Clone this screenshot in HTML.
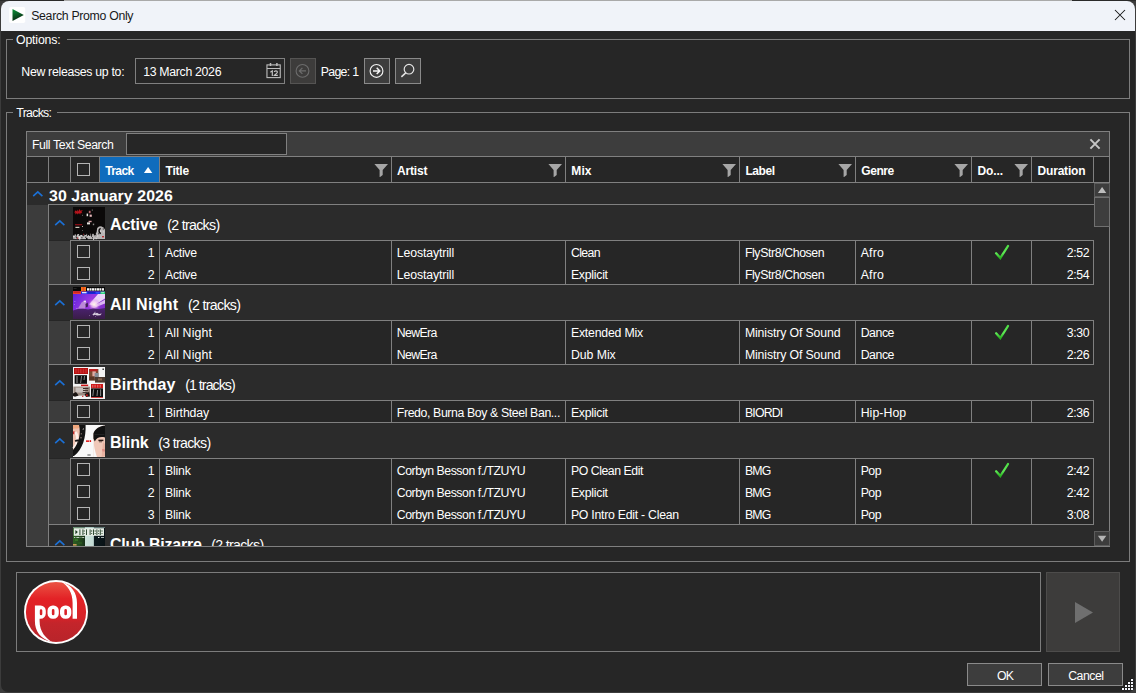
<!DOCTYPE html>
<html>
<head>
<meta charset="utf-8">
<title>Search Promo Only</title>
<style>
html,body{margin:0;padding:0;}
body{width:1136px;height:693px;overflow:hidden;background:#3c3c3c;font-family:"Liberation Sans",sans-serif;font-size:12px;color:#fff;position:relative;}
.abs{position:absolute;}
svg{display:block;overflow:visible;}
#win{position:absolute;left:1px;top:1px;width:1134px;height:691px;background:#262626;border-radius:8px 8px 7px 7px;overflow:hidden;}
.t{position:absolute;white-space:nowrap;}
.cb{position:absolute;box-sizing:border-box;border:1px solid #b4b4b4;background:#262626;}
</style>
</head>
<body>
<div class="abs" style="left:0;top:0;width:1136px;height:1px;background:#2a2a2a;"></div><div class="abs" style="left:64px;top:0;width:1008px;height:1px;background:#a9a9a9;"></div>
<div id="win">
<div class="abs" style="left:0px;top:0px;width:1134px;height:30px;background:#f0f3f9;"></div>
<svg class="abs" style="left:8px;top:6px" width="16" height="16" viewBox="0 0 16 16"><defs><linearGradient id="pg" x1="0" y1="0" x2="0.3" y2="1"><stop offset="0" stop-color="#0c963a"/><stop offset="1" stop-color="#0a2a14"/></linearGradient></defs><rect x="0.2" y="0" width="16" height="16" rx="1.8" fill="#ffffff"/><path d="M3.5 2 L14.8 7.9 L3.5 13.9 Z" fill="url(#pg)"/></svg>
<div class="t" style="top:7.00px;font-size:12.30px;line-height:16px;left:30.20px;letter-spacing:-0.313px;color:#191919;">Search Promo Only</div>
<svg class="abs" style="left:1113px;top:8px" width="12" height="12" viewBox="0 0 12 12"><path d="M1 1 L11 11 M11 1 L1 11" stroke="#151515" stroke-width="1.05" fill="none"/></svg>
<div class="abs" style="left:5px;top:38px;width:1124px;height:60px;box-sizing:border-box;border:1px solid #7c7c7c;"></div>
<div class="abs" style="left:12px;top:32px;width:54px;height:14px;background:#262626;"></div>
<div class="t" style="top:31.00px;font-size:12.30px;line-height:16px;left:15.00px;letter-spacing:-0.163px;">Options:</div>
<div class="t" style="top:63.00px;font-size:12.30px;line-height:16px;left:20.30px;letter-spacing:-0.300px;">New releases up to:</div>
<div class="abs" style="left:134px;top:57px;width:150px;height:26px;background:#262626;box-sizing:border-box;border:1px solid #808080;"></div>
<div class="t" style="top:63.00px;font-size:12.30px;line-height:16px;left:142.20px;letter-spacing:-0.312px;">13 March 2026</div>
<svg class="abs" style="left:264px;top:61px" width="17" height="17" viewBox="0 0 17 17"><g fill="none" stroke="#bdbdbd" stroke-width="1.1"><rect x="1.95" y="2.9" width="13.3" height="12.7"/><path d="M2 6.5 H15.2"/><path d="M5.5 0.9 V4 M11.9 0.9 V4" stroke-width="1.5"/><path d="M5.4 10.3 L7.3 8.9 V13.9 M9.3 10 C9.5 8.5 12.4 8.5 12.4 10.1 C12.4 11.4 10.2 12.2 9.3 13.4 H12.8" stroke-width="1.15" stroke="#c6c6c6"/></g></svg>
<div class="abs" style="left:289px;top:57px;width:26px;height:26px;background:#3d3c3b;box-sizing:border-box;border:1px solid #555453;"></div>
<svg class="abs" style="left:293px;top:61px" width="18" height="18" viewBox="0 0 18 18"><g fill="none" stroke="#6c6c6c" stroke-width="1.1"><circle cx="8.5" cy="8.9" r="6.4"/><path d="M12 8.9 H5.6 M8.4 5.9 L5.4 8.9 L8.4 11.9" stroke-width="1.3"/></g></svg>
<div class="t" style="top:63.00px;font-size:12.30px;line-height:16px;left:319.80px;letter-spacing:-0.700px;">Page: 1</div>
<div class="abs" style="left:363px;top:57px;width:26px;height:26px;background:#3d3d3d;box-sizing:border-box;border:1px solid #8a8a8a;"></div>
<svg class="abs" style="left:367px;top:61px" width="18" height="18" viewBox="0 0 18 18"><g fill="none" stroke="#f2f2f2" stroke-width="1.15"><circle cx="8.5" cy="8.9" r="6.4"/><path d="M5 8.9 H11.6 M8.7 5.8 L11.8 8.9 L8.7 12" stroke-width="1.5"/></g></svg>
<div class="abs" style="left:394px;top:57px;width:26px;height:26px;background:#3d3d3d;box-sizing:border-box;border:1px solid #8a8a8a;"></div>
<svg class="abs" style="left:398px;top:61px" width="18" height="18" viewBox="0 0 18 18"><g fill="none" stroke="#e4e4e4" stroke-width="1.2"><circle cx="10" cy="7.2" r="4.8"/><path d="M6.7 10.9 L2.4 14.9" stroke-width="1.5"/></g></svg>
<div class="abs" style="left:5px;top:111px;width:1124px;height:450px;box-sizing:border-box;border:1px solid #7c7c7c;"></div>
<div class="abs" style="left:12px;top:105px;width:44px;height:14px;background:#262626;"></div>
<div class="t" style="top:104.00px;font-size:12.30px;line-height:16px;left:15.30px;letter-spacing:-0.695px;">Tracks:</div>
<div class="abs" style="left:25px;top:130px;width:1084px;height:416px;box-sizing:border-box;border:1px solid #808080;"></div>
<div class="abs" style="left:26px;top:131px;width:1082px;height:24px;background:#3d3d3d;"></div>
<div class="t" style="top:136.00px;font-size:12.30px;line-height:16px;left:31.00px;letter-spacing:-0.404px;">Full Text Search</div>
<div class="abs" style="left:125px;top:132px;width:161px;height:22px;background:#262626;box-sizing:border-box;border:1px solid #808080;"></div>
<svg class="abs" style="left:1088px;top:137px" width="12" height="12" viewBox="0 0 12 12"><path d="M1.4 1.4 L10.6 10.6 M10.6 1.4 L1.4 10.6" stroke="#c6c6c6" stroke-width="2" fill="none"/></svg>
<div class="abs" style="left:26px;top:155px;width:1082px;height:1px;background:#808080;"></div>
<div class="abs" style="left:26px;top:181px;width:1082px;height:1px;background:#808080;"></div>
<div class="abs" style="left:47px;top:156px;width:1px;height:25px;background:#808080;"></div>
<div class="abs" style="left:69px;top:156px;width:1px;height:25px;background:#808080;"></div>
<div class="abs" style="left:98px;top:156px;width:1px;height:25px;background:#808080;"></div>
<div class="abs" style="left:158px;top:156px;width:1px;height:25px;background:#808080;"></div>
<div class="abs" style="left:390px;top:156px;width:1px;height:25px;background:#808080;"></div>
<div class="abs" style="left:564px;top:156px;width:1px;height:25px;background:#808080;"></div>
<div class="abs" style="left:738px;top:156px;width:1px;height:25px;background:#808080;"></div>
<div class="abs" style="left:854px;top:156px;width:1px;height:25px;background:#808080;"></div>
<div class="abs" style="left:970px;top:156px;width:1px;height:25px;background:#808080;"></div>
<div class="abs" style="left:1030px;top:156px;width:1px;height:25px;background:#808080;"></div>
<div class="abs" style="left:1092px;top:156px;width:1px;height:25px;background:#808080;"></div>
<div class="abs" style="left:99px;top:156px;width:59px;height:25px;background:#0f6cbd;"></div>
<div class="cb" style="left:76px;top:162px;width:13px;height:13px;"></div>
<div class="t" style="top:162.00px;font-size:12.00px;line-height:16px;left:104.20px;letter-spacing:-0.592px;font-weight:bold;">Track</div>
<div class="t" style="top:162.00px;font-size:12.00px;line-height:16px;left:164.50px;letter-spacing:-0.190px;font-weight:bold;">Title</div>
<div class="t" style="top:162.00px;font-size:12.00px;line-height:16px;left:396.00px;letter-spacing:-0.156px;font-weight:bold;">Artist</div>
<div class="t" style="top:162.00px;font-size:12.00px;line-height:16px;left:570.30px;letter-spacing:0.099px;font-weight:bold;">Mix</div>
<div class="t" style="top:162.00px;font-size:12.00px;line-height:16px;left:744.40px;letter-spacing:-0.388px;font-weight:bold;">Label</div>
<div class="t" style="top:162.00px;font-size:12.00px;line-height:16px;left:860.20px;letter-spacing:-0.396px;font-weight:bold;">Genre</div>
<div class="t" style="top:162.00px;font-size:12.00px;line-height:16px;left:976.60px;letter-spacing:-0.140px;font-weight:bold;">Do...</div>
<div class="t" style="top:162.00px;font-size:12.00px;line-height:16px;left:1036.60px;letter-spacing:-0.204px;font-weight:bold;">Duration</div>
<svg class="abs" style="left:142px;top:165px" width="10" height="8" viewBox="0 0 10 8"><path d="M0.9 7 L5.1 0.9 L9.3 7 Z" fill="#fff"/></svg>
<svg class="abs" style="left:373px;top:163px" width="14" height="14" viewBox="0 0 14 14"><path d="M0.4 0 H14 L8.7 6 V11 L6.1 13 H5.6 V6 Z" fill="#a6a6a6"/></svg>
<svg class="abs" style="left:547px;top:163px" width="14" height="14" viewBox="0 0 14 14"><path d="M0.4 0 H14 L8.7 6 V11 L6.1 13 H5.6 V6 Z" fill="#a6a6a6"/></svg>
<svg class="abs" style="left:721px;top:163px" width="14" height="14" viewBox="0 0 14 14"><path d="M0.4 0 H14 L8.7 6 V11 L6.1 13 H5.6 V6 Z" fill="#a6a6a6"/></svg>
<svg class="abs" style="left:837px;top:163px" width="14" height="14" viewBox="0 0 14 14"><path d="M0.4 0 H14 L8.7 6 V11 L6.1 13 H5.6 V6 Z" fill="#a6a6a6"/></svg>
<svg class="abs" style="left:953px;top:163px" width="14" height="14" viewBox="0 0 14 14"><path d="M0.4 0 H14 L8.7 6 V11 L6.1 13 H5.6 V6 Z" fill="#a6a6a6"/></svg>
<svg class="abs" style="left:1013px;top:163px" width="14" height="14" viewBox="0 0 14 14"><path d="M0.4 0 H14 L8.7 6 V11 L6.1 13 H5.6 V6 Z" fill="#a6a6a6"/></svg>
<div class="abs" style="left:1093px;top:182px;width:15px;height:363px;background:#2b2b2b;"></div>
<div class="abs" style="left:1093px;top:182px;width:16px;height:14px;background:#3d3d3d;box-sizing:border-box;border:1px solid #5c5c5c;"></div>
<svg class="abs" style="left:1096px;top:185px" width="10" height="8" viewBox="0 0 10 8"><path d="M0.9 7 L5.1 1 L9.3 7 Z" fill="#bdbdbd"/></svg>
<div class="abs" style="left:1093px;top:196px;width:16px;height:30px;background:#3d3d3d;box-sizing:border-box;border:1px solid #707070;"></div>
<div class="abs" style="left:1093px;top:530px;width:16px;height:15px;background:#3d3d3d;box-sizing:border-box;border:1px solid #5c5c5c;"></div>
<svg class="abs" style="left:1096px;top:534px" width="10" height="8" viewBox="0 0 10 8"><path d="M0.9 0.8 L5.1 6.8 L9.3 0.8 Z" fill="#b4b4b4"/></svg>
<div class="abs" style="left:26px;top:182px;width:1067px;height:363px;overflow:hidden;">
<div class="abs" style="left:0px;top:0px;width:1067px;height:22px;background:#2b2b2b;"></div>
<svg class="abs" style="left:5.1px;top:8.4px" width="12" height="8" viewBox="0 0 12 8"><path d="M1.2 5.2 L5.8 0.8 L10.4 5.2" stroke="#1b70d6" stroke-width="1.6" fill="none"/></svg>
<div class="t" style="top:4.50px;font-size:15.40px;line-height:16px;left:22.10px;letter-spacing:0.092px;font-weight:bold;transform:rotate(0.03deg) scale(1.030,1.000);transform-origin:0 13.50px;">30 January 2026</div>
<div class="abs" style="left:0px;top:22px;width:21px;height:400px;background:#3c3c3c;"></div>
<div class="abs" style="left:21px;top:21px;width:1px;height:397px;background:#808080;"></div>
<div class="abs" style="left:21px;top:21px;width:1046px;height:1px;background:#808080;"></div>
<div class="abs" style="left:22px;top:22px;width:1045px;height:35px;background:#2b2b2b;"></div>
<svg class="abs" style="left:27px;top:37px" width="12" height="8" viewBox="0 0 12 8"><path d="M1.2 5.2 L5.8 0.8 L10.4 5.2" stroke="#1b70d6" stroke-width="1.6" fill="none"/></svg>
<svg class="abs" style="left:46px;top:24px" width="32" height="32" viewBox="0 0 32 32"><rect x="0" y="0" width="32" height="32" fill="#0b0909"/><path d="M1.2 5.5 L2.6 3.2 L3.4 4.6 L4.4 2.4 L5 4.8 L6.6 2 L7.4 3.8 L9.8 3 L8.4 5 L9.6 6.2 L7.6 6 L7.2 7.8 L6 6 L4.6 7.6 L4 6.2 L2 7.4 L2.6 5.8 Z" fill="#b8141c"/><rect x="2" y="17.2" width="7.2" height="1.1" fill="#a01018"/><rect x="2.4" y="19.8" width="4" height="1.1" fill="#e6e2d2"/><rect x="13.6" y="6.6" width="1.5" height="2.6" fill="#ecebe6"/><rect x="15.8" y="3.8" width="1.8" height="2.4" fill="#b86870"/><rect x="16.6" y="7.6" width="2.2" height="2.2" fill="#e8b8bc"/><rect x="18.8" y="2.6" width="1" height="1" fill="#9a9a98"/><rect x="15.6" y="13.8" width="3" height="1.4" fill="#d8a0a6"/><rect x="14" y="15.4" width="3" height="2" fill="#e4e0dc"/><rect x="19.8" y="16.6" width="1.4" height="1.6" fill="#8a8886"/><rect x="9" y="7.8" width="1" height="1" fill="#6a6866"/><rect x="9" y="19" width="1" height="1" fill="#b8b6ae"/><rect x="9" y="23" width="1" height="1" fill="#5a5856"/><path d="M0 30.2 L1.5 28.6 L3 29.6 L4.6 27.4 L6 29 L8 27.8 L10 28.6 L13 28 L14 26.4 L15 28.4 L18 28.2 L20 26.6 L22 28 L23.6 25 L24.2 21 L26 19.6 L28 19.2 L30.6 20.6 L32 22.6 L32 32 L0 32 Z" fill="#b9b6b6"/><rect x="10" y="27.2" width="0.8" height="0.8" fill="#0b0909"/><rect x="25.5" y="26.3" width="0.8" height="0.8" fill="#8a8888"/><rect x="2.7" y="28.5" width="0.8" height="2" fill="#1a1616"/><rect x="13.2" y="30.4" width="0.8" height="2" fill="#0b0909"/><rect x="19.5" y="31" width="1.4" height="1" fill="#8a8888"/><rect x="1.5" y="27.5" width="0.8" height="1" fill="#8a8888"/><rect x="13" y="29" width="1" height="2" fill="#8a8888"/><rect x="25.3" y="26.3" width="0.8" height="1" fill="#0b0909"/><rect x="3" y="29.8" width="0.8" height="2" fill="#8a8888"/><rect x="6.4" y="29.7" width="1" height="1" fill="#d8d6d6"/><rect x="18.2" y="28.6" width="0.8" height="0.8" fill="#e8e6e6"/><rect x="21.7" y="27.6" width="1" height="2" fill="#8a8888"/><rect x="15.3" y="28.1" width="1" height="2" fill="#d8d6d6"/><rect x="30.4" y="24.4" width="0.8" height="1" fill="#e8e6e6"/><rect x="13.1" y="31" width="1.4" height="2" fill="#0b0909"/><rect x="24.5" y="23.5" width="1.4" height="1" fill="#e8e6e6"/><rect x="18" y="28.6" width="1" height="1" fill="#0b0909"/><rect x="21.6" y="26.8" width="1.4" height="1" fill="#0b0909"/><rect x="20.1" y="31.2" width="1" height="2" fill="#d8d6d6"/><rect x="12" y="29.6" width="1" height="1" fill="#0b0909"/><rect x="5.2" y="27.1" width="0.8" height="1" fill="#0b0909"/><rect x="4" y="27.7" width="1" height="0.8" fill="#d8d6d6"/><rect x="5.2" y="28.4" width="0.8" height="1" fill="#e8e6e6"/><rect x="26.8" y="24.4" width="1.4" height="1" fill="#e8e6e6"/><rect x="29.7" y="21.6" width="1.4" height="0.8" fill="#1a1616"/><rect x="0.4" y="30.4" width="1" height="1" fill="#1a1616"/><rect x="0.1" y="28.5" width="1.4" height="2" fill="#e8e6e6"/><rect x="9.9" y="27.1" width="1.4" height="2" fill="#8a8888"/><rect x="21" y="26.8" width="1.4" height="1" fill="#0b0909"/><rect x="12.3" y="28.4" width="1.4" height="1" fill="#d8d6d6"/><rect x="1.9" y="26.8" width="1" height="0.8" fill="#1a1616"/><rect x="3.4" y="29.3" width="0.8" height="2" fill="#0b0909"/><rect x="4.7" y="27" width="1.4" height="0.8" fill="#e8e6e6"/><rect x="2.2" y="27.5" width="0.8" height="2" fill="#d8d6d6"/><rect x="7.8" y="28.1" width="1" height="0.8" fill="#e8e6e6"/><rect x="3.6" y="28.8" width="1" height="1" fill="#d8d6d6"/><rect x="9.7" y="27.2" width="1" height="2" fill="#0b0909"/><rect x="8.2" y="30.4" width="1.4" height="0.8" fill="#1a1616"/><rect x="6.4" y="31" width="0.8" height="2" fill="#e8e6e6"/><rect x="16.8" y="26.6" width="1" height="2" fill="#8a8888"/><rect x="26.8" y="22.6" width="0.8" height="1" fill="#e8e6e6"/><rect x="23.9" y="28.6" width="1.4" height="0.8" fill="#e8e6e6"/><rect x="19" y="30.2" width="0.8" height="1" fill="#1a1616"/><rect x="22.9" y="27.6" width="1" height="1" fill="#8a8888"/><rect x="22.7" y="31.2" width="1" height="1" fill="#e8e6e6"/><rect x="6" y="29.3" width="1" height="2" fill="#e8e6e6"/><path d="M27.6 21.4 C25.4 22.6 25.4 25.6 27.8 26.6" stroke="#0b0909" stroke-width="1.5" fill="none"/><path d="M16.6 23.4 V29 M18.6 22.6 V29 M21.4 24 V28.4 M14.4 25 V29" stroke="#0b0909" stroke-width="0.9"/><rect x="4" y="30.6" width="1.1" height="1.1" fill="#c01018"/><rect x="29.2" y="29" width="1.6" height="1.4" fill="#b81018"/><rect x="10" y="26.8" width="1" height="0.8" fill="#a81018"/></svg>
<div class="t" style="top:33.50px;font-size:16.00px;line-height:16px;left:83.00px;letter-spacing:-0.071px;font-weight:bold;">Active</div>
<div class="t" style="top:34.00px;font-size:14.20px;line-height:16px;left:140.20px;letter-spacing:-0.687px;">(2 tracks)</div>
<div class="abs" style="left:43px;top:57px;width:1024px;height:1px;background:#808080;"></div>
<div class="abs" style="left:22px;top:58px;width:21px;height:44px;background:#3c3c3c;"></div>
<div class="abs" style="left:44px;top:58px;width:1022px;height:44px;background:#262626;"></div>
<div class="abs" style="left:43px;top:57px;width:1px;height:45px;background:#808080;"></div>
<div class="abs" style="left:72px;top:57px;width:1px;height:45px;background:#808080;"></div>
<div class="abs" style="left:132px;top:57px;width:1px;height:45px;background:#808080;"></div>
<div class="abs" style="left:364px;top:57px;width:1px;height:45px;background:#808080;"></div>
<div class="abs" style="left:538px;top:57px;width:1px;height:45px;background:#808080;"></div>
<div class="abs" style="left:712px;top:57px;width:1px;height:45px;background:#808080;"></div>
<div class="abs" style="left:828px;top:57px;width:1px;height:45px;background:#808080;"></div>
<div class="abs" style="left:944px;top:57px;width:1px;height:45px;background:#808080;"></div>
<div class="abs" style="left:1004px;top:57px;width:1px;height:45px;background:#808080;"></div>
<div class="abs" style="left:1066px;top:57px;width:1px;height:45px;background:#808080;"></div>
<div class="cb" style="left:50px;top:62px;width:13px;height:13px;"></div>
<div class="t" style="top:62.00px;font-size:12.30px;line-height:16px;left:-172.40px;width:300.00px;text-align:right;">1</div>
<div class="t" style="top:62.00px;font-size:12.30px;line-height:16px;left:138.00px;letter-spacing:-0.283px;">Active</div>
<div class="t" style="top:62.00px;font-size:12.30px;line-height:16px;left:369.80px;letter-spacing:-0.124px;">Leostaytrill</div>
<div class="t" style="top:62.00px;font-size:12.30px;line-height:16px;left:543.90px;letter-spacing:-0.588px;">Clean</div>
<div class="t" style="top:62.00px;font-size:12.30px;line-height:16px;left:717.90px;letter-spacing:-0.384px;">FlyStr8/Chosen</div>
<div class="t" style="top:62.00px;font-size:12.30px;line-height:16px;left:833.70px;letter-spacing:0.235px;">Afro</div>
<svg class="abs" style="left:965px;top:60px" width="20" height="18" viewBox="0 0 20 18"><defs><linearGradient id="ck0" x1="0" y1="0" x2="0" y2="1"><stop offset="0" stop-color="#4fe046"/><stop offset="0.6" stop-color="#5fe855"/><stop offset="1" stop-color="#27b01f"/></linearGradient></defs><path d="M4.1 10.3 L8.3 15 L16 3" stroke="url(#ck0)" stroke-width="2.3" fill="none" stroke-linecap="round" stroke-linejoin="miter"/></svg>
<div class="t" style="top:62.00px;font-size:12.30px;line-height:16px;left:762.60px;width:299.67px;text-align:right;letter-spacing:-0.335px;">2:52</div>
<div class="cb" style="left:50px;top:84px;width:13px;height:13px;"></div>
<div class="t" style="top:84.00px;font-size:12.30px;line-height:16px;left:-172.40px;width:300.00px;text-align:right;">2</div>
<div class="t" style="top:84.00px;font-size:12.30px;line-height:16px;left:138.00px;letter-spacing:-0.283px;">Active</div>
<div class="t" style="top:84.00px;font-size:12.30px;line-height:16px;left:369.80px;letter-spacing:-0.124px;">Leostaytrill</div>
<div class="t" style="top:84.00px;font-size:12.30px;line-height:16px;left:543.90px;letter-spacing:-0.258px;">Explicit</div>
<div class="t" style="top:84.00px;font-size:12.30px;line-height:16px;left:717.90px;letter-spacing:-0.384px;">FlyStr8/Chosen</div>
<div class="t" style="top:84.00px;font-size:12.30px;line-height:16px;left:833.70px;letter-spacing:0.235px;">Afro</div>
<div class="t" style="top:84.00px;font-size:12.30px;line-height:16px;left:762.60px;width:299.67px;text-align:right;letter-spacing:-0.335px;">2:54</div>
<div class="abs" style="left:21px;top:101px;width:1046px;height:1px;background:#808080;"></div>
<div class="abs" style="left:22px;top:102px;width:1045px;height:35px;background:#2b2b2b;"></div>
<svg class="abs" style="left:27px;top:117px" width="12" height="8" viewBox="0 0 12 8"><path d="M1.2 5.2 L5.8 0.8 L10.4 5.2" stroke="#1b70d6" stroke-width="1.6" fill="none"/></svg>
<svg class="abs" style="left:46px;top:104px" width="32" height="32" viewBox="0 0 32 32"><defs><linearGradient id="an1" x1="0" y1="0.1" x2="1" y2="0.8"><stop offset="0" stop-color="#5220dc"/><stop offset="0.5" stop-color="#9a38e2"/><stop offset="1" stop-color="#7a2cc0"/></linearGradient><radialGradient id="an2" cx="0.66" cy="0.55" r="0.2"><stop offset="0" stop-color="#fffbe6"/><stop offset="0.45" stop-color="#f6d0f4" stop-opacity="0.75"/><stop offset="1" stop-color="#c060e0" stop-opacity="0"/></radialGradient><linearGradient id="an3" x1="0" y1="0" x2="0" y2="1"><stop offset="0" stop-color="#4a2270"/><stop offset="1" stop-color="#3a1c48"/></linearGradient></defs><rect x="0" y="0" width="32" height="32" fill="url(#an1)"/><path d="M16 17.5 L25 7 L32 7 L32 11.4 L21 18.5 Z" fill="#f3e2fb" opacity="0.92"/><path d="M21 18.6 L32 12.8 L32 16.4 L23 20 Z" fill="#efd8fa" opacity="0.8"/><rect x="0" y="0" width="32" height="32" fill="url(#an2)"/><path d="M0 23.4 L5 22 L10 21.4 L15 22.4 L20 21.6 L26 22 L32 21 L32 32 L0 32 Z" fill="url(#an3)"/><path d="M5 21.6 L8.6 15.6 L11 13.8 L13 14.4 L13.4 17 L12 21.6 Z" fill="#c9a4d6" opacity="0.75"/><rect x="10.8" y="13.6" width="2.2" height="1.6" fill="#f0e6f4" opacity="0.9"/><path d="M12.4 17 L14.8 15.4 L15 19.6 L12.8 20.6 Z" fill="#2a1838" opacity="0.8"/><rect x="1.4" y="14" width="0.9" height="0.9" fill="#c8a0f0" opacity="0.8"/><rect x="1" y="17" width="0.9" height="0.9" fill="#c8a0f0" opacity="0.7"/><rect x="3.4" y="21" width="1" height="0.8" fill="#f0c0f0" opacity="0.8"/><path d="M19.4 27.4 L21.6 25.6 L22.6 26.6 L24 25.8 L26 27 L28.8 26.4 L27.4 28.2 L24 28.6 L22 27.8 L20.4 28.4 Z" fill="#f2ecf6" opacity="0.85"/><rect x="21.6" y="24.8" width="1" height="0.8" fill="#f2ecf6" opacity="0.8"/><rect x="16" y="28" width="0.8" height="0.8" fill="#d8c8e8" opacity="0.6"/><rect x="22" y="29.2" width="0.8" height="0.8" fill="#d8c8e8" opacity="0.6"/><rect x="0" y="0" width="32" height="4.4" fill="#070707"/><rect x="8" y="0" width="5" height="4.6" fill="#ff8c1a"/><path d="M9.1 0 V4.6 M10.5 0 V4.6 M11.9 0 V4.6" stroke="#e0341c" stroke-width="0.7"/><rect x="14" y="1.2" width="2.2" height="2.4" fill="#f6f6f6"/><rect x="16.6" y="1.2" width="1.6" height="2.4" fill="#f6f6f6"/><rect x="18.6" y="1.2" width="2.6" height="2.4" fill="#f6f6f6"/><rect x="21.6" y="1.2" width="1.6" height="2.4" fill="#f6f6f6"/><rect x="23.6" y="1.2" width="2.4" height="2.4" fill="#f6f6f6"/><rect x="26.4" y="1.2" width="1.8" height="2.4" fill="#f6f6f6"/><rect x="28.8" y="1.2" width="2.2" height="2.4" fill="#f6f6f6"/><rect x="0.6" y="1.4" width="3" height="0.6" fill="#3a3a3a"/><rect x="0" y="4.2" width="8" height="2.8" fill="#ee3c2c"/><rect x="0.6" y="4.8" width="6.4" height="0.8" fill="#b81c18"/><rect x="8" y="4.6" width="19.4" height="2.4" fill="#1a2cec"/><rect x="9" y="5" width="4.6" height="1.3" fill="#dfe6ff"/><rect x="15" y="5.4" width="7" height="0.9" fill="#1420a8"/><rect x="23" y="5.2" width="3.6" height="1.2" fill="#3a58f8"/><rect x="27.4" y="4.6" width="4.6" height="2.4" fill="#16d070"/><rect x="28.2" y="5.2" width="3" height="1" fill="#d8ffe8" opacity="0.7"/></svg>
<div class="t" style="top:113.50px;font-size:16.00px;line-height:16px;left:83.00px;letter-spacing:0.293px;font-weight:bold;">All Night</div>
<div class="t" style="top:114.00px;font-size:14.20px;line-height:16px;left:161.00px;letter-spacing:-0.687px;">(2 tracks)</div>
<div class="abs" style="left:43px;top:137px;width:1024px;height:1px;background:#808080;"></div>
<div class="abs" style="left:22px;top:138px;width:21px;height:44px;background:#3c3c3c;"></div>
<div class="abs" style="left:44px;top:138px;width:1022px;height:44px;background:#262626;"></div>
<div class="abs" style="left:43px;top:137px;width:1px;height:45px;background:#808080;"></div>
<div class="abs" style="left:72px;top:137px;width:1px;height:45px;background:#808080;"></div>
<div class="abs" style="left:132px;top:137px;width:1px;height:45px;background:#808080;"></div>
<div class="abs" style="left:364px;top:137px;width:1px;height:45px;background:#808080;"></div>
<div class="abs" style="left:538px;top:137px;width:1px;height:45px;background:#808080;"></div>
<div class="abs" style="left:712px;top:137px;width:1px;height:45px;background:#808080;"></div>
<div class="abs" style="left:828px;top:137px;width:1px;height:45px;background:#808080;"></div>
<div class="abs" style="left:944px;top:137px;width:1px;height:45px;background:#808080;"></div>
<div class="abs" style="left:1004px;top:137px;width:1px;height:45px;background:#808080;"></div>
<div class="abs" style="left:1066px;top:137px;width:1px;height:45px;background:#808080;"></div>
<div class="cb" style="left:50px;top:142px;width:13px;height:13px;"></div>
<div class="t" style="top:142.00px;font-size:12.30px;line-height:16px;left:-172.40px;width:300.00px;text-align:right;">1</div>
<div class="t" style="top:142.00px;font-size:12.30px;line-height:16px;left:138.00px;letter-spacing:0.133px;">All Night</div>
<div class="t" style="top:142.00px;font-size:12.30px;line-height:16px;left:369.80px;letter-spacing:-0.625px;">NewEra</div>
<div class="t" style="top:142.00px;font-size:12.30px;line-height:16px;left:543.90px;letter-spacing:-0.210px;">Extended Mix</div>
<div class="t" style="top:142.00px;font-size:12.30px;line-height:16px;left:717.90px;letter-spacing:-0.127px;">Ministry Of Sound</div>
<div class="t" style="top:142.00px;font-size:12.30px;line-height:16px;left:833.70px;letter-spacing:-0.451px;">Dance</div>
<svg class="abs" style="left:965px;top:140px" width="20" height="18" viewBox="0 0 20 18"><defs><linearGradient id="ck1" x1="0" y1="0" x2="0" y2="1"><stop offset="0" stop-color="#4fe046"/><stop offset="0.6" stop-color="#5fe855"/><stop offset="1" stop-color="#27b01f"/></linearGradient></defs><path d="M4.1 10.3 L8.3 15 L16 3" stroke="url(#ck1)" stroke-width="2.3" fill="none" stroke-linecap="round" stroke-linejoin="miter"/></svg>
<div class="t" style="top:142.00px;font-size:12.30px;line-height:16px;left:762.60px;width:299.67px;text-align:right;letter-spacing:-0.335px;">3:30</div>
<div class="cb" style="left:50px;top:164px;width:13px;height:13px;"></div>
<div class="t" style="top:164.00px;font-size:12.30px;line-height:16px;left:-172.40px;width:300.00px;text-align:right;">2</div>
<div class="t" style="top:164.00px;font-size:12.30px;line-height:16px;left:138.00px;letter-spacing:0.133px;">All Night</div>
<div class="t" style="top:164.00px;font-size:12.30px;line-height:16px;left:369.80px;letter-spacing:-0.625px;">NewEra</div>
<div class="t" style="top:164.00px;font-size:12.30px;line-height:16px;left:543.90px;letter-spacing:-0.044px;">Dub Mix</div>
<div class="t" style="top:164.00px;font-size:12.30px;line-height:16px;left:717.90px;letter-spacing:-0.127px;">Ministry Of Sound</div>
<div class="t" style="top:164.00px;font-size:12.30px;line-height:16px;left:833.70px;letter-spacing:-0.451px;">Dance</div>
<div class="t" style="top:164.00px;font-size:12.30px;line-height:16px;left:762.60px;width:299.67px;text-align:right;letter-spacing:-0.335px;">2:26</div>
<div class="abs" style="left:21px;top:181px;width:1046px;height:1px;background:#808080;"></div>
<div class="abs" style="left:22px;top:182px;width:1045px;height:35px;background:#2b2b2b;"></div>
<svg class="abs" style="left:27px;top:197px" width="12" height="8" viewBox="0 0 12 8"><path d="M1.2 5.2 L5.8 0.8 L10.4 5.2" stroke="#1b70d6" stroke-width="1.6" fill="none"/></svg>
<svg class="abs" style="left:46px;top:184px" width="32" height="32" viewBox="0 0 32 32"><rect x="0" y="0" width="32" height="32" fill="#f4f4f4"/><rect x="1" y="1" width="14" height="6" fill="#b40e0e"/><rect x="2.2" y="1.8" width="1.6" height="4.4" fill="#d84040" opacity="0.55"/><rect x="4.6" y="1.8" width="1.6" height="4.4" fill="#d84040" opacity="0.55"/><rect x="7" y="1.8" width="1.6" height="4.4" fill="#d84040" opacity="0.55"/><rect x="9.6" y="1.8" width="1.6" height="4.4" fill="#d84040" opacity="0.55"/><rect x="12.2" y="1.8" width="1.6" height="4.4" fill="#d84040" opacity="0.55"/><rect x="1.6" y="8.2" width="12.4" height="8.6" fill="#0d0d0d"/><rect x="3.6" y="9" width="0.8" height="7" fill="#f4f4f4" opacity="0.8"/><path d="M8.6 9 L7.6 16 M11.6 9 L11 13" stroke="#f4f4f4" stroke-width="0.7" opacity="0.7"/><rect x="16" y="2" width="9.4" height="11.6" fill="#7a4c34"/><rect x="16.4" y="2" width="8" height="2.4" fill="#b82020"/><rect x="19.4" y="4.4" width="3.4" height="5" fill="#e2aaa2"/><rect x="21.6" y="6" width="4" height="5.6" fill="#848c96"/><rect x="16.4" y="9.6" width="5" height="3.6" fill="#5a3626"/><rect x="22" y="10" width="10" height="5.6" fill="#4c3a30"/><rect x="25" y="11.4" width="4" height="2" fill="#8a6a54"/><rect x="29.4" y="1.6" width="1.6" height="1.2" fill="#1a1a1a"/><rect x="0.4" y="19.6" width="16.6" height="9" fill="#9c8c82"/><rect x="2.6" y="20.6" width="9.6" height="5" fill="#c9c1bd"/><rect x="10" y="21" width="5.4" height="1" fill="#3a2a26"/><rect x="10" y="23" width="5" height="1" fill="#4a3a34"/><rect x="9.6" y="25" width="5" height="0.9" fill="#3a2a26"/><rect x="8" y="17.6" width="7.2" height="1.5" fill="#cc1616"/><path d="M0 26.6 L3 25 L5.6 28.4 L2 29.8 L0 29 Z M11.6 27 L16 25 L17 29.6 L13 30 Z" fill="#1a1412"/><rect x="13" y="27.4" width="1.8" height="1.8" fill="#cc1616"/><rect x="9" y="28.8" width="1.4" height="1" fill="#cc1616"/><rect x="18" y="17" width="12" height="4.4" fill="#cc1616"/><rect x="19" y="17.8" width="1.4" height="2.8" fill="#f0a0a0" opacity="0.5"/><rect x="21.4" y="17.8" width="1.4" height="2.8" fill="#f0a0a0" opacity="0.5"/><rect x="24" y="17.8" width="1.4" height="2.8" fill="#f0a0a0" opacity="0.5"/><rect x="26.6" y="17.8" width="1.4" height="2.8" fill="#f0a0a0" opacity="0.5"/><rect x="18" y="21.4" width="12" height="8.6" fill="#0d0d0d"/><path d="M20.6 22.4 L19.8 29 M24.6 23 L24 29 M27.6 22.4 V29" stroke="#f4f4f4" stroke-width="0.7" opacity="0.75"/><rect x="18" y="30.2" width="12" height="0.8" fill="#cc1616"/></svg>
<div class="t" style="top:193.50px;font-size:16.00px;line-height:16px;left:83.00px;letter-spacing:0.087px;font-weight:bold;">Birthday</div>
<div class="t" style="top:194.00px;font-size:14.20px;line-height:16px;left:158.20px;letter-spacing:-0.957px;">(1 tracks)</div>
<div class="abs" style="left:43px;top:217px;width:1024px;height:1px;background:#808080;"></div>
<div class="abs" style="left:22px;top:218px;width:21px;height:22px;background:#3c3c3c;"></div>
<div class="abs" style="left:44px;top:218px;width:1022px;height:22px;background:#262626;"></div>
<div class="abs" style="left:43px;top:217px;width:1px;height:23px;background:#808080;"></div>
<div class="abs" style="left:72px;top:217px;width:1px;height:23px;background:#808080;"></div>
<div class="abs" style="left:132px;top:217px;width:1px;height:23px;background:#808080;"></div>
<div class="abs" style="left:364px;top:217px;width:1px;height:23px;background:#808080;"></div>
<div class="abs" style="left:538px;top:217px;width:1px;height:23px;background:#808080;"></div>
<div class="abs" style="left:712px;top:217px;width:1px;height:23px;background:#808080;"></div>
<div class="abs" style="left:828px;top:217px;width:1px;height:23px;background:#808080;"></div>
<div class="abs" style="left:944px;top:217px;width:1px;height:23px;background:#808080;"></div>
<div class="abs" style="left:1004px;top:217px;width:1px;height:23px;background:#808080;"></div>
<div class="abs" style="left:1066px;top:217px;width:1px;height:23px;background:#808080;"></div>
<div class="cb" style="left:50px;top:222px;width:13px;height:13px;"></div>
<div class="t" style="top:222.00px;font-size:12.30px;line-height:16px;left:-172.40px;width:300.00px;text-align:right;">1</div>
<div class="t" style="top:222.00px;font-size:12.30px;line-height:16px;left:138.00px;letter-spacing:-0.140px;">Birthday</div>
<div class="t" style="top:222.00px;font-size:12.30px;line-height:16px;left:369.80px;letter-spacing:-0.382px;">Fredo, Burna Boy &amp; Steel Ban...</div>
<div class="t" style="top:222.00px;font-size:12.30px;line-height:16px;left:543.90px;letter-spacing:-0.258px;">Explicit</div>
<div class="t" style="top:222.00px;font-size:12.30px;line-height:16px;left:717.90px;letter-spacing:-0.812px;">BIORDI</div>
<div class="t" style="top:222.00px;font-size:12.30px;line-height:16px;left:833.70px;letter-spacing:0.055px;">Hip-Hop</div>
<div class="t" style="top:222.00px;font-size:12.30px;line-height:16px;left:762.60px;width:299.67px;text-align:right;letter-spacing:-0.335px;">2:36</div>
<div class="abs" style="left:21px;top:239px;width:1046px;height:1px;background:#808080;"></div>
<div class="abs" style="left:22px;top:240px;width:1045px;height:35px;background:#2b2b2b;"></div>
<svg class="abs" style="left:27px;top:255px" width="12" height="8" viewBox="0 0 12 8"><path d="M1.2 5.2 L5.8 0.8 L10.4 5.2" stroke="#1b70d6" stroke-width="1.6" fill="none"/></svg>
<svg class="abs" style="left:46px;top:242px" width="32" height="32" viewBox="0 0 32 32"><rect x="0" y="0" width="32" height="32" fill="#f8f8f8"/><path d="M0 0 H7 C8.2 8 8 18 0 26 Z" fill="#f0c2b0"/><path d="M0 0 H6 V3 C4 4 2 3 0 4 Z" fill="#f0a070" opacity="0.8"/><rect x="0" y="6.4" width="1.6" height="2.8" fill="#c42c2c"/><path d="M2.4 7 C5.4 11 5 19 0.4 23.6" stroke="#fff0ea" stroke-width="2.6" fill="none"/><path d="M6 0 H12.6 C13 12 10 24 1 31 H0 V25 C6 18 8 8 6 0 Z" fill="#131313"/><path d="M2.2 16.2 C3.8 15 6 15.4 7.2 16.6" stroke="#131313" stroke-width="1.7" fill="none"/><rect x="4" y="16.4" width="1.6" height="1" fill="#5a4a44"/><path d="M9.4 4.6 L10.6 3 L10.8 4.4 Z" fill="#e8e0dc"/><rect x="7.8" y="8.4" width="0.9" height="0.9" fill="#d8c0b4"/><rect x="7.6" y="12" width="0.8" height="1.4" fill="#c8b0a4"/><path d="M20.4 32 V9 C22 3.4 27 1 32 0.4 V32 Z" fill="#f0c8b8"/><path d="M20.4 13.4 V8.6 C22 3.2 27 1 32 0.4 V12.4 C28 11.2 23.4 12.2 21.8 16.6 Z" fill="#111111"/><rect x="21.4" y="9.2" width="10" height="0.7" fill="#2a2a2a"/><path d="M25.4 15.4 H30.4" stroke="#2a1a16" stroke-width="1.5"/><path d="M26 16.8 H29" stroke="#4a3630" stroke-width="0.8"/><path d="M21 16 C20.4 20 22 26 24 32 H20.4 V16 Z" fill="#f8f8f8"/><path d="M29 24.4 C30.4 23.6 31.4 24 32 24.6 V26.4 H29.6 Z" fill="#d67878"/><path d="M30 17 L32 19 V31 L28.6 32 Z" fill="#e2a08e" opacity="0.55"/><rect x="13" y="15.4" width="3" height="1.5" fill="#e01010"/><rect x="16.6" y="15.2" width="1.5" height="1.8" fill="#e01010"/><rect x="14.4" y="29.4" width="3.2" height="1.2" fill="#6e6e6e"/></svg>
<div class="t" style="top:251.50px;font-size:16.00px;line-height:16px;left:83.00px;letter-spacing:-0.103px;font-weight:bold;">Blink</div>
<div class="t" style="top:252.00px;font-size:14.20px;line-height:16px;left:131.20px;letter-spacing:-0.687px;">(3 tracks)</div>
<div class="abs" style="left:43px;top:275px;width:1024px;height:1px;background:#808080;"></div>
<div class="abs" style="left:22px;top:276px;width:21px;height:66px;background:#3c3c3c;"></div>
<div class="abs" style="left:44px;top:276px;width:1022px;height:66px;background:#262626;"></div>
<div class="abs" style="left:43px;top:275px;width:1px;height:67px;background:#808080;"></div>
<div class="abs" style="left:72px;top:275px;width:1px;height:67px;background:#808080;"></div>
<div class="abs" style="left:132px;top:275px;width:1px;height:67px;background:#808080;"></div>
<div class="abs" style="left:364px;top:275px;width:1px;height:67px;background:#808080;"></div>
<div class="abs" style="left:538px;top:275px;width:1px;height:67px;background:#808080;"></div>
<div class="abs" style="left:712px;top:275px;width:1px;height:67px;background:#808080;"></div>
<div class="abs" style="left:828px;top:275px;width:1px;height:67px;background:#808080;"></div>
<div class="abs" style="left:944px;top:275px;width:1px;height:67px;background:#808080;"></div>
<div class="abs" style="left:1004px;top:275px;width:1px;height:67px;background:#808080;"></div>
<div class="abs" style="left:1066px;top:275px;width:1px;height:67px;background:#808080;"></div>
<div class="cb" style="left:50px;top:280px;width:13px;height:13px;"></div>
<div class="t" style="top:280.00px;font-size:12.30px;line-height:16px;left:-172.40px;width:300.00px;text-align:right;">1</div>
<div class="t" style="top:280.00px;font-size:12.30px;line-height:16px;left:138.00px;letter-spacing:-0.192px;">Blink</div>
<div class="t" style="top:280.00px;font-size:12.30px;line-height:16px;left:369.80px;letter-spacing:-0.471px;">Corbyn Besson f./TZUYU</div>
<div class="t" style="top:280.00px;font-size:12.30px;line-height:16px;left:543.90px;letter-spacing:-0.457px;">PO Clean Edit</div>
<div class="t" style="top:280.00px;font-size:12.30px;line-height:16px;left:717.90px;letter-spacing:-0.806px;">BMG</div>
<div class="t" style="top:280.00px;font-size:12.30px;line-height:16px;left:833.70px;letter-spacing:-0.529px;">Pop</div>
<svg class="abs" style="left:965px;top:278px" width="20" height="18" viewBox="0 0 20 18"><defs><linearGradient id="ck3" x1="0" y1="0" x2="0" y2="1"><stop offset="0" stop-color="#4fe046"/><stop offset="0.6" stop-color="#5fe855"/><stop offset="1" stop-color="#27b01f"/></linearGradient></defs><path d="M4.1 10.3 L8.3 15 L16 3" stroke="url(#ck3)" stroke-width="2.3" fill="none" stroke-linecap="round" stroke-linejoin="miter"/></svg>
<div class="t" style="top:280.00px;font-size:12.30px;line-height:16px;left:762.60px;width:299.67px;text-align:right;letter-spacing:-0.335px;">2:42</div>
<div class="cb" style="left:50px;top:302px;width:13px;height:13px;"></div>
<div class="t" style="top:302.00px;font-size:12.30px;line-height:16px;left:-172.40px;width:300.00px;text-align:right;">2</div>
<div class="t" style="top:302.00px;font-size:12.30px;line-height:16px;left:138.00px;letter-spacing:-0.192px;">Blink</div>
<div class="t" style="top:302.00px;font-size:12.30px;line-height:16px;left:369.80px;letter-spacing:-0.471px;">Corbyn Besson f./TZUYU</div>
<div class="t" style="top:302.00px;font-size:12.30px;line-height:16px;left:543.90px;letter-spacing:-0.258px;">Explicit</div>
<div class="t" style="top:302.00px;font-size:12.30px;line-height:16px;left:717.90px;letter-spacing:-0.806px;">BMG</div>
<div class="t" style="top:302.00px;font-size:12.30px;line-height:16px;left:833.70px;letter-spacing:-0.529px;">Pop</div>
<div class="t" style="top:302.00px;font-size:12.30px;line-height:16px;left:762.60px;width:299.67px;text-align:right;letter-spacing:-0.335px;">2:42</div>
<div class="cb" style="left:50px;top:324px;width:13px;height:13px;"></div>
<div class="t" style="top:324.00px;font-size:12.30px;line-height:16px;left:-172.40px;width:300.00px;text-align:right;">3</div>
<div class="t" style="top:324.00px;font-size:12.30px;line-height:16px;left:138.00px;letter-spacing:-0.192px;">Blink</div>
<div class="t" style="top:324.00px;font-size:12.30px;line-height:16px;left:369.80px;letter-spacing:-0.471px;">Corbyn Besson f./TZUYU</div>
<div class="t" style="top:324.00px;font-size:12.30px;line-height:16px;left:543.90px;letter-spacing:-0.261px;">PO Intro Edit - Clean</div>
<div class="t" style="top:324.00px;font-size:12.30px;line-height:16px;left:717.90px;letter-spacing:-0.806px;">BMG</div>
<div class="t" style="top:324.00px;font-size:12.30px;line-height:16px;left:833.70px;letter-spacing:-0.529px;">Pop</div>
<div class="t" style="top:324.00px;font-size:12.30px;line-height:16px;left:762.60px;width:299.67px;text-align:right;letter-spacing:-0.335px;">3:08</div>
<div class="abs" style="left:21px;top:341px;width:1046px;height:1px;background:#808080;"></div>
<div class="abs" style="left:22px;top:342px;width:1045px;height:35px;background:#2b2b2b;"></div>
<svg class="abs" style="left:27px;top:357px" width="12" height="8" viewBox="0 0 12 8"><path d="M1.2 5.2 L5.8 0.8 L10.4 5.2" stroke="#1b70d6" stroke-width="1.6" fill="none"/></svg>
<svg class="abs" style="left:46px;top:344px" width="32" height="32" viewBox="0 0 32 32"><defs><linearGradient id="cb1" x1="0" y1="0" x2="1" y2="0"><stop offset="0" stop-color="#2e6024"/><stop offset="0.3" stop-color="#1e401c"/><stop offset="0.37" stop-color="#18301a"/><stop offset="0.375" stop-color="#cde4dc"/><stop offset="0.64" stop-color="#c2dad4"/><stop offset="0.645" stop-color="#0c1a1e"/><stop offset="1" stop-color="#091216"/></linearGradient></defs><rect x="0" y="0" width="32" height="32" fill="url(#cb1)"/><rect x="0" y="0" width="32" height="1" fill="#9ab8b0" opacity="0.6"/><rect x="0.8" y="1.2" width="30.2" height="7.6" fill="#e6eee6"/><path d="M2.4 3 L4.8 5 L2.4 7.2 Z" fill="#1c3a20"/><rect x="6.4" y="2.4" width="1" height="5.6" fill="#1c3a20" opacity="0.9"/><rect x="9.4" y="2.4" width="1" height="5.6" fill="#1c3a20" opacity="0.9"/><rect x="13" y="2.4" width="1" height="5.6" fill="#1c3a20" opacity="0.9"/><rect x="16.6" y="2.4" width="1" height="5.6" fill="#1c3a20" opacity="0.9"/><rect x="20" y="2.4" width="1" height="5.6" fill="#1c3a20" opacity="0.9"/><rect x="23.4" y="2.4" width="1" height="5.6" fill="#1c3a20" opacity="0.9"/><rect x="26.8" y="2.4" width="1" height="5.6" fill="#1c3a20" opacity="0.9"/><rect x="10.6" y="3.4" width="1.2" height="1.2" fill="#1c3a20" opacity="0.85"/><rect x="10.6" y="6" width="1.2" height="1" fill="#1c3a20" opacity="0.7"/><rect x="18" y="3.4" width="1.2" height="1.2" fill="#1c3a20" opacity="0.85"/><rect x="18" y="6" width="1.2" height="1" fill="#1c3a20" opacity="0.7"/><rect x="21.6" y="3.4" width="1.2" height="1.2" fill="#1c3a20" opacity="0.85"/><rect x="21.6" y="6" width="1.2" height="1" fill="#1c3a20" opacity="0.7"/><rect x="25" y="3.4" width="1.2" height="1.2" fill="#1c3a20" opacity="0.85"/><rect x="25" y="6" width="1.2" height="1" fill="#1c3a20" opacity="0.7"/><rect x="28.4" y="3.4" width="1.2" height="1.2" fill="#1c3a20" opacity="0.85"/><rect x="28.4" y="6" width="1.2" height="1" fill="#1c3a20" opacity="0.7"/><rect x="1.2" y="10" width="1" height="1" fill="#e2eae2"/><rect x="3.4" y="10" width="3" height="0.9" fill="#cfd8cf"/><rect x="7.6" y="10" width="0.8" height="0.9" fill="#cfd8cf"/><rect x="9.2" y="10" width="2" height="0.9" fill="#cfd8cf"/><rect x="25" y="10" width="1.4" height="1" fill="#e2eae2"/><rect x="28" y="10" width="3" height="0.9" fill="#b8c2c2"/><rect x="2" y="12" width="3" height="2" fill="#3c7a2c" opacity="0.8"/><rect x="5" y="15" width="4" height="2" fill="#2a5a20" opacity="0.8"/><rect x="0" y="17" width="3.6" height="1.6" fill="#c89858"/></svg>
<div class="t" style="top:353.50px;font-size:16.00px;line-height:16px;left:83.00px;letter-spacing:-0.220px;font-weight:bold;">Club Bizarre</div>
<div class="t" style="top:354.00px;font-size:14.20px;line-height:16px;left:184.20px;letter-spacing:-0.687px;">(2 tracks)</div>
<div class="abs" style="left:43px;top:377px;width:1024px;height:1px;background:#808080;"></div>
</div>
<div class="abs" style="left:15px;top:571px;width:1025px;height:80px;box-sizing:border-box;border:1px solid #7c7c7c;"></div>
<svg class="abs" style="left:22px;top:578px" width="66" height="66" viewBox="0 0 66 66"><defs><linearGradient id="lg" x1="0" y1="0" x2="0" y2="1"><stop offset="0" stop-color="#ea5444"/><stop offset="0.28" stop-color="#e32226"/><stop offset="0.6" stop-color="#d62228"/><stop offset="0.68" stop-color="#c4252b"/><stop offset="1" stop-color="#b8242a"/></linearGradient></defs>
<circle cx="33" cy="33" r="32" fill="#ffffff"/><circle cx="33" cy="33" r="30.1" fill="url(#lg)"/>
<g fill="#ffffff">
<path fill-rule="evenodd" d="M11.9 26.6 H17.6 a5.2 5.2 0 0 1 5.2 5.2 v2.7 a5.2 5.2 0 0 1 -5.2 5.2 H16.6 V42 C16.6 53 23 59.5 30 63.6 C17 60 11.9 52 11.9 42 Z M16.8 31.4 a1.25 1.25 0 0 1 2.5 0 v3.5 a1.25 1.25 0 0 1 -2.5 0 Z"/>
<path fill-rule="evenodd" d="M24.50 31.8 a5.2 5.2 0 0 1 5.2 -5.2 h0.9 a5.2 5.2 0 0 1 5.2 5.2 v2.7 a5.2 5.2 0 0 1 -5.2 5.2 h-0.9 a5.2 5.2 0 0 1 -5.2 -5.2 Z M28.85 31.4 a1.3 1.3 0 0 1 2.6 0 v3.5 a1.3 1.3 0 0 1 -2.6 0 Z"/><path fill-rule="evenodd" d="M37.00 31.8 a5.2 5.2 0 0 1 5.2 -5.2 h0.9 a5.2 5.2 0 0 1 5.2 5.2 v2.7 a5.2 5.2 0 0 1 -5.2 5.2 h-0.9 a5.2 5.2 0 0 1 -5.2 -5.2 Z M41.35 31.4 a1.3 1.3 0 0 1 2.6 0 v3.5 a1.3 1.3 0 0 1 -2.6 0 Z"/>
<path d="M54 39.7 V24 C54 14 49 6.5 38 2.6 C45 7 49.6 13.5 49.6 24 V39.7 Z"/></g></svg>
<div class="abs" style="left:1045px;top:571px;width:74px;height:80px;background:#3d3c3b;box-sizing:border-box;border:1px solid #4d4c4b;"></div>
<svg class="abs" style="left:1073px;top:600px" width="20" height="23" viewBox="0 0 20 23"><path d="M1 1 L19 11.5 L1 22 Z" fill="#6f6f6f"/></svg>
<div class="abs" style="left:966px;top:662px;width:75px;height:23px;background:#3d3d3d;box-sizing:border-box;border:1px solid #8a8a8a;"></div>
<div class="t" style="top:667.00px;font-size:12.30px;line-height:16px;left:996.00px;letter-spacing:-0.786px;">OK</div>
<div class="abs" style="left:1047px;top:662px;width:75px;height:23px;background:#3d3d3d;box-sizing:border-box;border:1px solid #8a8a8a;"></div>
<div class="t" style="top:667.00px;font-size:12.30px;line-height:16px;left:1067.20px;letter-spacing:-0.481px;">Cancel</div>
<svg class="abs" style="left:1121px;top:678px" width="12" height="12" viewBox="0 0 12 12"><rect x="-0.6" y="8.4" width="2" height="2" fill="#161616"/><rect x="0" y="9" width="2" height="2" fill="#f4f6fc"/><rect x="2.4" y="5.4" width="2" height="2" fill="#161616"/><rect x="3" y="6" width="2" height="2" fill="#f4f6fc"/><rect x="2.4" y="8.4" width="2" height="2" fill="#161616"/><rect x="3" y="9" width="2" height="2" fill="#f4f6fc"/><rect x="5.4" y="2.4" width="2" height="2" fill="#161616"/><rect x="6" y="3" width="2" height="2" fill="#f4f6fc"/><rect x="5.4" y="5.4" width="2" height="2" fill="#161616"/><rect x="6" y="6" width="2" height="2" fill="#f4f6fc"/><rect x="5.4" y="8.4" width="2" height="2" fill="#161616"/><rect x="6" y="9" width="2" height="2" fill="#f4f6fc"/><rect x="8.4" y="-0.6" width="2" height="2" fill="#161616"/><rect x="9" y="0" width="2" height="2" fill="#f4f6fc"/><rect x="8.4" y="2.4" width="2" height="2" fill="#161616"/><rect x="9" y="3" width="2" height="2" fill="#f4f6fc"/><rect x="8.4" y="5.4" width="2" height="2" fill="#161616"/><rect x="9" y="6" width="2" height="2" fill="#f4f6fc"/><rect x="8.4" y="8.4" width="2" height="2" fill="#161616"/><rect x="9" y="9" width="2" height="2" fill="#f4f6fc"/></svg>
</div>
</body>
</html>
